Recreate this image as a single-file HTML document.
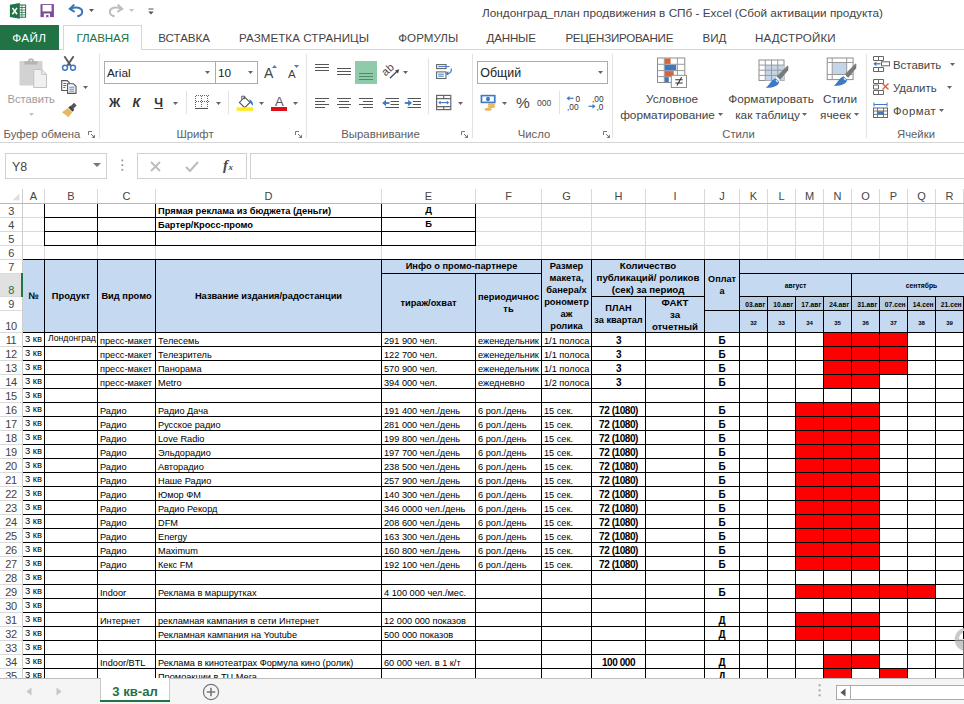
<!DOCTYPE html>
<html lang="ru"><head><meta charset="utf-8"><title>Excel</title>
<style>
html,body{margin:0;padding:0;background:#fff;}
body{width:964px;height:704px;overflow:hidden;position:relative;font-family:"Liberation Sans",sans-serif;color:#000;}
#grid{position:absolute;left:0;top:0;width:964px;height:678px;overflow:hidden;}
#grid>div,#grid>svg{position:absolute;}
.t{white-space:nowrap;overflow:hidden;font-size:9.2px;box-sizing:border-box;}
.t.l{padding-left:2px;padding-top:2px;}
.t.c{text-align:center;padding-top:1px;}
.t.b{font-weight:bold;font-size:9.3px;}
.t.a{font-size:9.4px;padding-left:2px;line-height:11px !important;}
.t.bb{font-size:8.7px;padding-left:3px;line-height:11px !important;}
.t.hd{font-size:11px;color:#444;-webkit-text-stroke:0;}
.hc{display:flex;align-items:center;justify-content:center;text-align:center;font-weight:bold;line-height:12px;overflow:hidden;}
.hc span{display:block;}
#top,#bot{position:absolute;left:0;width:964px;}
#top{top:0;height:189px;}
#top>*,#bot>*{position:absolute;}
.u{font-size:11.6px;color:#444;white-space:nowrap;line-height:14px;}
.tab{text-align:center;}
</style></head><body>

<div id="top">
<svg style="left:9px;top:2px" width="18" height="18" viewBox="0 0 18 18"><rect x="9" y="3" width="7.6" height="12.2" fill="#fff" stroke="#217346" stroke-width="1"/><path d="M12.9 3v12.2M9 5.5h7.6M9 8h7.6M9 10.4h7.6M9 12.8h7.6" stroke="#217346" stroke-width="0.8"/><path d="M0.9 2.7L10.8 0.9v15.9L0.9 15.1z" fill="#217346"/><path d="M3.4 5.9l4.6 6.4M8 5.9l-4.6 6.4" stroke="#fff" stroke-width="1.6"/></svg>
<svg style="left:40px;top:4px" width="14" height="14" viewBox="0 0 14 14"><rect x="0.5" y="0.1" width="13.4" height="13" fill="#7d4a9f"/><rect x="2.5" y="1" width="9.1" height="6.4" fill="#fff"/><rect x="3.8" y="9.5" width="6.2" height="3.6" fill="#fff"/><rect x="6.2" y="11" width="2.3" height="2.1" fill="#7d4a9f"/></svg>
<svg style="left:68px;top:4px" width="16" height="14" viewBox="0 0 16 14"><path d="M6.3 0.6L1.8 4.8l4.8 3" fill="none" stroke="#3a74b8" stroke-width="2"/><path d="M2.5 4.7C8 2.4 14 3.5 14.2 7.5c0.2 2.6-2.2 4.4-4.9 4.8" fill="none" stroke="#3a74b8" stroke-width="2"/></svg>
<svg style="left:89px;top:9px" width="5" height="3" viewBox="0 0 5 3"><path d="M0 0h5l-2.5 3z" fill="#555"/></svg>
<svg style="left:108px;top:4px" width="16" height="14" viewBox="0 0 16 14"><path d="M9.7 0.6L14.2 4.8l-4.8 3" fill="none" stroke="#bdbdbd" stroke-width="2"/><path d="M13.5 4.7C8 2.4 2 3.5 1.8 7.5c-0.2 2.6 2.2 4.4 4.9 4.8" fill="none" stroke="#bdbdbd" stroke-width="2"/></svg>
<svg style="left:129px;top:9px" width="5" height="3" viewBox="0 0 5 3"><path d="M0 0h5l-2.5 3z" fill="#c4c4c4"/></svg>
<svg style="left:148px;top:8px" width="6" height="7" viewBox="0 0 6 7"><path d="M0.5 1h5" stroke="#555" stroke-width="1"/><path d="M0.3 3.5h5.4L3 6.5z" fill="#555"/></svg>
<div class="u" style="left:382.5px;width:600px;text-align:center;top:6.12px;font-size:11.77px;color:#444;">Лондонград_план продвижения в СПб - Excel (Сбой активации продукта)</div>
<div style="left:0;top:49px;width:964px;height:1px;background:#d6d6d6"></div>
<div style="left:0;top:25px;width:59px;height:25px;background:#217346"></div>
<div style="left:63px;top:25px;width:79px;height:25px;background:#fff;border:1px solid #d6d6d6;border-bottom:none;box-sizing:border-box"></div>
<div class="u" style="left:12.3px;top:31.11px;font-size:11.8px;color:#fff;letter-spacing:0.3px;">ФАЙЛ</div>
<div class="u" style="left:76.5px;top:31.18px;font-size:11.6px;color:#217346;letter-spacing:-0.1px;">ГЛАВНАЯ</div>
<div class="u" style="left:158.3px;top:31.2px;font-size:11.6px;letter-spacing:-0.06px;color:#444">ВСТАВКА</div>
<div class="u" style="left:239px;top:31.2px;font-size:11.6px;letter-spacing:0.055px;color:#444">РАЗМЕТКА СТРАНИЦЫ</div>
<div class="u" style="left:398.3px;top:31.2px;font-size:11.6px;letter-spacing:0px;color:#444">ФОРМУЛЫ</div>
<div class="u" style="left:486.6px;top:31.2px;font-size:11.6px;letter-spacing:-0.2px;color:#444">ДАННЫЕ</div>
<div class="u" style="left:565.4px;top:31.2px;font-size:11.6px;letter-spacing:-0.27px;color:#444">РЕЦЕНЗИРОВАНИЕ</div>
<div class="u" style="left:702.6px;top:31.2px;font-size:11.6px;letter-spacing:-0.1px;color:#444">ВИД</div>
<div class="u" style="left:755px;top:31.2px;font-size:11.6px;letter-spacing:0.15px;color:#444">НАДСТРОЙКИ</div>
<svg style="left:19px;top:57px" width="29" height="32" viewBox="0 0 29 32"><rect x="0.5" y="4" width="23" height="24.5" rx="1" fill="#d2d2d2"/><path d="M5.5 7.5V4.2h3.6a2.9 2.9 0 0 1 5.8 0h3.6v3.3z" fill="#b4b4b4"/><circle cx="12" cy="3.6" r="1" fill="#e6e6e6"/><path d="M14.7 12.5h8l4.8 4.8v13.2H14.7z" fill="#f1eff1" stroke="#c2c2c2" stroke-width="1"/><path d="M22.7 12.5v4.8h4.8" fill="none" stroke="#c2c2c2" stroke-width="1"/></svg>
<div class="u" style="left:7.5px;top:91.72px;font-size:11.2px;color:#9d9d9d;">Вставить</div>
<svg style="left:29px;top:113px" width="5" height="3" viewBox="0 0 5 3"><path d="M0 0h5l-2.5 3z" fill="#c4c4c4"/></svg>
<svg style="left:61px;top:56px" width="16" height="15" viewBox="0 0 16 15"><path d="M3.4 0.3l6.4 9.6M12.6 0.3l-6.4 9.6" stroke="#5a5a5a" stroke-width="1.9" fill="none"/><circle cx="4" cy="11.8" r="2.5" fill="#fff" stroke="#3c78c6" stroke-width="1.5"/><circle cx="12" cy="11.8" r="2.5" fill="#fff" stroke="#3c78c6" stroke-width="1.5"/></svg>
<svg style="left:61px;top:80px" width="16" height="14" viewBox="0 0 16 14"><path d="M0.7 0.6h5.5l2 2v7.9H0.7z" fill="#fff" stroke="#555" stroke-width="1.1"/><path d="M2.3 3.5h3M2.3 5.5h3M2.3 7.5h2" stroke="#555" stroke-width="0.9"/><path d="M6.6 3.7h5.8l2.6 2.6v7.1H6.6z" fill="#fff" stroke="#555" stroke-width="1.1"/><path d="M8.3 7.2h5M8.3 9.2h5M8.3 11.2h5" stroke="#3c78c6" stroke-width="0.9"/></svg>
<svg style="left:83px;top:86px" width="5" height="3" viewBox="0 0 5 3"><path d="M0 0h5l-2.5 3z" fill="#666"/></svg>
<svg style="left:61px;top:102px" width="17" height="16" viewBox="0 0 17 16"><path d="M9.5 4.2L13 0.8l2.6 2.6-3.4 3.5z" fill="#555"/><path d="M7.3 5.6l2-1.8 4 4-1.8 2z" fill="#444"/><path d="M1 10.2l6-4.2 4.3 4.3-3.8 5z" fill="#e8b763"/></svg>
<div class="u" style="left:3.5px;top:127.08px;font-size:11.3px;color:#606060;">Буфер обмена</div>
<svg style="left:88px;top:131px" width="8" height="8" viewBox="0 0 8 8"><path d="M0.5 4V0.5H4" fill="none" stroke="#777" stroke-width="1"/><path d="M3 3l3.5 3.5" stroke="#777" stroke-width="1"/><path d="M7 3.5V7H3.5z" fill="#777"/></svg>
<div style="left:99px;top:54px;width:1px;height:84px;background:#e2e2e2"></div>
<div style="left:104px;top:61px;width:112px;height:23px;border:1px solid #ababab;box-sizing:border-box;background:#fff"></div>
<div style="left:215px;top:61px;width:43px;height:23px;border:1px solid #ababab;box-sizing:border-box;background:#fff"></div>
<div class="u" style="left:107px;top:66.11px;font-size:11.8px;color:#222;">Arial</div>
<svg style="left:205px;top:71px" width="5" height="3" viewBox="0 0 5 3"><path d="M0 0h5l-2.5 3z" fill="#666"/></svg>
<div class="u" style="left:218px;top:66.11px;font-size:11.8px;color:#222;">10</div>
<svg style="left:248px;top:71px" width="5" height="3" viewBox="0 0 5 3"><path d="M0 0h5l-2.5 3z" fill="#666"/></svg>
<div class="u" style="left:264px;top:66.15px;font-size:14px;color:#444;">A</div>
<svg style="left:272px;top:65px" width="5" height="3" viewBox="0 0 5 3"><path d="M0 3h5L2.5 0z" fill="#4a7dbb"/></svg>
<div class="u" style="left:288px;top:67.02px;font-size:11.5px;color:#444;">A</div>
<svg style="left:294px;top:65px" width="5" height="3" viewBox="0 0 5 3"><path d="M0 0h5L2.5 3z" fill="#4a7dbb"/></svg>
<div class="u" style="left:109px;top:96.17px;font-size:12.5px;color:#333;font-weight:bold;">Ж</div>
<div class="u" style="left:132.5px;top:96.17px;font-size:12.5px;color:#333;font-weight:bold;font-style:italic;">К</div>
<div class="u" style="left:154.3px;top:95.67px;font-size:12.5px;color:#333;text-decoration:underline;font-weight:bold;">Ч</div>
<svg style="left:173px;top:102px" width="5" height="3" viewBox="0 0 5 3"><path d="M0 0h5l-2.5 3z" fill="#666"/></svg>
<div style="left:186px;top:91px;width:1px;height:23px;background:#e2e2e2"></div>
<svg style="left:195px;top:95px" width="14" height="15" viewBox="0 0 14 15"><g shape-rendering="crispEdges"><path d="M0.5 0.5h13M0.5 6.5h13M0.5 0.5v13M6.5 0.5v13M12.5 0.5v13" fill="none" stroke="#666" stroke-width="1" stroke-dasharray="1 1"/><path d="M0 13.5h13" stroke="#555" stroke-width="1"/></g></svg>
<svg style="left:216px;top:102px" width="5" height="3" viewBox="0 0 5 3"><path d="M0 0h5l-2.5 3z" fill="#666"/></svg>
<div style="left:228px;top:91px;width:1px;height:23px;background:#e2e2e2"></div>
<svg style="left:236px;top:94px" width="18" height="17" viewBox="0 0 18 17"><path d="M8.7 3.2l5.3 5.2-5.3 5.3-5.3-5.3z" fill="#fff" stroke="#555" stroke-width="1.1"/><path d="M5.8 5.6V2.2h2.8v3" fill="none" stroke="#555" stroke-width="1"/><path d="M13.4 5.2c2.8 1.2 4.2 3.8 3.4 6.8-1-1.4-1.8-2.6-3.2-3.4z" fill="#3c78c6"/><rect x="0.7" y="13.3" width="16.3" height="3.5" fill="#ffec19"/></svg>
<svg style="left:259px;top:102px" width="5" height="3" viewBox="0 0 5 3"><path d="M0 0h5l-2.5 3z" fill="#666"/></svg>
<div class="u" style="left:275px;top:95.10px;font-size:13px;color:#555;">A</div>
<div style="left:271px;top:107px;width:16px;height:4px;background:#e0101a"></div>
<svg style="left:293px;top:102px" width="5" height="3" viewBox="0 0 5 3"><path d="M0 0h5l-2.5 3z" fill="#666"/></svg>
<div class="u" style="left:-105px;width:600px;text-align:center;top:127.08px;font-size:11.3px;color:#606060;">Шрифт</div>
<svg style="left:294.5px;top:131px" width="8" height="8" viewBox="0 0 8 8"><path d="M0.5 4V0.5H4" fill="none" stroke="#777" stroke-width="1"/><path d="M3 3l3.5 3.5" stroke="#777" stroke-width="1"/><path d="M7 3.5V7H3.5z" fill="#777"/></svg>
<div style="left:306px;top:54px;width:1px;height:84px;background:#e2e2e2"></div>
<svg style="left:314px;top:63px" width="16" height="14" viewBox="0 0 16 14"><path d="M1 1.5H15" stroke="#555" stroke-width="1"/><path d="M1 4.5H15" stroke="#555" stroke-width="1"/><path d="M1 7.5H15" stroke="#555" stroke-width="1"/></svg>
<svg style="left:336px;top:66px" width="16" height="14" viewBox="0 0 16 14"><path d="M1 2.5H15" stroke="#555" stroke-width="1"/><path d="M1 5.5H15" stroke="#555" stroke-width="1"/><path d="M1 8.5H15" stroke="#555" stroke-width="1"/></svg>
<div style="left:355px;top:61px;width:22px;height:23px;background:#8fcbab"></div>
<svg style="left:358px;top:70px" width="16" height="14" viewBox="0 0 16 14"><path d="M1 3.5H15" stroke="#4f8a6c" stroke-width="1"/><path d="M1 6.5H15" stroke="#4f8a6c" stroke-width="1"/><path d="M1 9.5H15" stroke="#4f8a6c" stroke-width="1"/></svg>
<svg style="left:382px;top:62px" width="19" height="19" viewBox="0 0 19 19"><text font-size="11" font-family="Liberation Sans" fill="#444" transform="translate(3.6,14.4) rotate(-42)">ab</text><path d="M7.9 16.3L15.6 8.8" stroke="#444" stroke-width="1.2"/><path d="M17.2 7.2l-4.2 1.2 3 3z" fill="#444"/></svg>
<svg style="left:403px;top:71px" width="5" height="3" viewBox="0 0 5 3"><path d="M0 0h5l-2.5 3z" fill="#666"/></svg>
<div style="left:428px;top:58px;width:1px;height:56px;background:#e2e2e2"></div>
<svg style="left:435px;top:63px" width="19" height="18" viewBox="0 0 19 18"><rect x="1.6" y="1.6" width="9.4" height="4" fill="#fff" stroke="#666" stroke-width="1.1"/><path d="M3.2 3.6H14.6" stroke="#3c78c6" stroke-width="1"/><rect x="1.6" y="8.9" width="9.4" height="6.6" fill="#fff" stroke="#666" stroke-width="1.1"/><path d="M3.2 11.2H8.8M3.2 13.2H8.8" stroke="#3c78c6" stroke-width="1"/><path d="M16.2 5.4c0.8 3-1 5-4 5.3" fill="none" stroke="#3c78c6" stroke-width="1.1"/><path d="M10.4 10.6l3-2.3v4.4z" fill="#3c78c6"/></svg>
<svg style="left:314px;top:97px" width="16" height="14" viewBox="0 0 16 14"><path d="M1 1.5H15" stroke="#555" stroke-width="1"/><path d="M1 4.5H11" stroke="#555" stroke-width="1"/><path d="M1 7.5H15" stroke="#555" stroke-width="1"/><path d="M1 10.5H11" stroke="#555" stroke-width="1"/></svg>
<svg style="left:336px;top:97px" width="16" height="14" viewBox="0 0 16 14"><path d="M1 1.5H15" stroke="#555" stroke-width="1"/><path d="M3 4.5H13" stroke="#555" stroke-width="1"/><path d="M1 7.5H15" stroke="#555" stroke-width="1"/><path d="M3 10.5H13" stroke="#555" stroke-width="1"/></svg>
<svg style="left:358px;top:97px" width="16" height="14" viewBox="0 0 16 14"><path d="M1 1.5H15" stroke="#555" stroke-width="1"/><path d="M5 4.5H15" stroke="#555" stroke-width="1"/><path d="M1 7.5H15" stroke="#555" stroke-width="1"/><path d="M5 10.5H15" stroke="#555" stroke-width="1"/></svg>
<svg style="left:382px;top:97px" width="18" height="12" viewBox="0 0 18 12"><path d="M3.5 1.5H17M8.5 4.5H17M8.5 7.5H17M3.5 10.5H17" stroke="#555" stroke-width="1"/><path d="M2.5 6h5" stroke="#3c78c6" stroke-width="1.8"/><path d="M0.2 6l3.8-3.2v6.4z" fill="#3c78c6"/></svg>
<svg style="left:404px;top:97px" width="18" height="12" viewBox="0 0 18 12"><path d="M3.5 1.5H17M8.8 4.5H17M8.8 7.5H17M3.5 10.5H17" stroke="#555" stroke-width="1"/><path d="M0.8 6h5" stroke="#3c78c6" stroke-width="1.8"/><path d="M8 6L4.2 2.8v6.4z" fill="#3c78c6"/></svg>
<svg style="left:435px;top:94px" width="17" height="17" viewBox="0 0 17 17"><rect x="1.6" y="1.4" width="14.2" height="14.2" fill="#fff" stroke="#666" stroke-width="1.2"/><path d="M1.6 4.6h14.2M1.6 12.6h14.2M8.7 1.4v3.2M8.7 12.6v3" stroke="#666" stroke-width="1.2"/><path d="M4.6 8.6h8.2" stroke="#3c78c6" stroke-width="1.1"/><path d="M3.2 8.6l2.4-1.9v3.8zM14.2 8.6l-2.4-1.9v3.8z" fill="#3c78c6"/></svg>
<svg style="left:458px;top:102px" width="5" height="3" viewBox="0 0 5 3"><path d="M0 0h5l-2.5 3z" fill="#666"/></svg>
<div class="u" style="left:80.5px;width:600px;text-align:center;top:127.03px;font-size:11.45px;color:#606060;">Выравнивание</div>
<svg style="left:460.5px;top:131px" width="8" height="8" viewBox="0 0 8 8"><path d="M0.5 4V0.5H4" fill="none" stroke="#777" stroke-width="1"/><path d="M3 3l3.5 3.5" stroke="#777" stroke-width="1"/><path d="M7 3.5V7H3.5z" fill="#777"/></svg>
<div style="left:472px;top:54px;width:1px;height:84px;background:#e2e2e2"></div>
<div style="left:477px;top:61px;width:131px;height:23px;border:1px solid #ababab;box-sizing:border-box;background:#fff"></div>
<div class="u" style="left:480.3px;top:66.10px;font-size:12.4px;color:#222;">Общий</div>
<svg style="left:598px;top:71px" width="5" height="3" viewBox="0 0 5 3"><path d="M0 0h5l-2.5 3z" fill="#666"/></svg>
<svg style="left:480px;top:94px" width="18" height="18" viewBox="0 0 18 18"><rect x="0.6" y="0.8" width="15" height="8.4" fill="#3c78c6"/><rect x="2.3" y="2.4" width="11.6" height="5.2" fill="#fff"/><ellipse cx="8" cy="5" rx="2" ry="2.3" fill="#3c78c6"/><ellipse cx="11.4" cy="10.2" rx="3.6" ry="1.5" fill="#e8b763"/><ellipse cx="11.4" cy="12.6" rx="3.6" ry="1.5" fill="#e8b763"/><ellipse cx="8.2" cy="15.3" rx="3.6" ry="1.5" fill="#e8b763"/></svg>
<svg style="left:502px;top:102px" width="5" height="3" viewBox="0 0 5 3"><path d="M0 0h5l-2.5 3z" fill="#666"/></svg>
<div class="u" style="left:516px;top:96.23px;font-size:15.5px;color:#444;">%</div>
<div class="u" style="left:537px;top:96.02px;font-size:8.6px;color:#444;">000</div>
<div style="left:559px;top:91px;width:1px;height:23px;background:#e2e2e2"></div>
<svg style="left:566px;top:95px" width="18" height="16" viewBox="0 0 18 16"><path d="M2.5 3.3h5" stroke="#3c78c6" stroke-width="1.2"/><path d="M0.5 3.3l3-2.4v4.8z" fill="#3c78c6"/><text x="9.5" y="6.5" font-size="8.3" font-family="Liberation Sans" fill="#333">0</text><text x="1" y="14.5" font-size="8.3" font-family="Liberation Sans" fill="#333">,00</text></svg>
<svg style="left:588px;top:95px" width="18" height="16" viewBox="0 0 18 16"><text x="4" y="6.5" font-size="8.3" font-family="Liberation Sans" fill="#333">,00</text><path d="M0.5 11.3h5" stroke="#3c78c6" stroke-width="1.2"/><path d="M7.5 11.3l-3-2.4v4.8z" fill="#3c78c6"/><text x="8.5" y="14.5" font-size="8.3" font-family="Liberation Sans" fill="#333">,0</text></svg>
<div class="u" style="left:234px;width:600px;text-align:center;top:127.08px;font-size:11.3px;color:#606060;">Число</div>
<svg style="left:603px;top:131px" width="8" height="8" viewBox="0 0 8 8"><path d="M0.5 4V0.5H4" fill="none" stroke="#777" stroke-width="1"/><path d="M3 3l3.5 3.5" stroke="#777" stroke-width="1"/><path d="M7 3.5V7H3.5z" fill="#777"/></svg>
<div style="left:612px;top:54px;width:1px;height:84px;background:#e2e2e2"></div>
<svg style="left:657px;top:57px" width="31" height="32" viewBox="0 0 31 32"><rect x="0.5" y="1" width="27.3" height="24.5" fill="#fff" stroke="#8e8e8e" stroke-width="1"/><path d="M0.5 7.3h27.3M0.5 13.6h27.3M0.5 19.6h27.3M7.3 1v24.5M20.4 1v24.5" stroke="#9a9a9a" stroke-width="1"/><rect x="7.8" y="1.5" width="5.8" height="5.4" fill="#d9623a"/><rect x="7.8" y="7.9" width="11.4" height="5.3" fill="#3c78c6"/><rect x="7.8" y="14.1" width="8.9" height="5.1" fill="#d9623a"/><rect x="7.8" y="20.1" width="4" height="5" fill="#3c78c6"/><rect x="14.3" y="18.3" width="15.2" height="12.2" fill="#fff" stroke="#8e8e8e" stroke-width="1"/><path d="M18.3 22.8h7.4M18.3 26h7.4M24.6 20.3l-4.6 8.2" stroke="#333" stroke-width="1.1"/></svg>
<div class="u" style="left:372px;width:600px;text-align:center;top:91.51px;font-size:11.8px;color:#444;">Условное</div>
<div class="u" style="left:367.5px;width:600px;text-align:center;top:107.51px;font-size:11.8px;color:#444;">форматирование</div>
<svg style="left:718px;top:113px" width="5" height="3" viewBox="0 0 5 3"><path d="M0 0h5l-2.5 3z" fill="#666"/></svg>
<svg style="left:758px;top:58px" width="33" height="32" viewBox="0 0 33 32"><rect x="1" y="2" width="25" height="20.5" fill="#fff" stroke="#8e8e8e" stroke-width="1"/><rect x="7.25" y="7.1" width="18.75" height="15.4" fill="#c4d5ea"/><path d="M1 7.1h25M1 12.2h25M1 17.4h25M7.25 2v20.5M13.5 2v20.5M19.75 2v20.5" stroke="#9a9a9a" stroke-width="1"/><path d="M18.8 18.3L29.6 7.6l0.8 0.3-0.2 4.4-8 9.5z" fill="#7a7a7a"/><path d="M17.4 19.9l1.1-1.2 3.4 3.4-1 1.3z" fill="#fff"/><path d="M17.6 20.2l3.6 3.5c-0.6 3.6-4.6 6.3-13.8 6.1 4-2.2 5-7.4 10.2-9.6z" fill="#3c78c6"/><path d="M17.6 21.8c1.6 0.2 2.6 1.2 2.6 2.8-1.2-0.2-2.6-1-2.6-2.8z" fill="#fff" opacity="0.85"/></svg>
<div class="u" style="left:471px;width:600px;text-align:center;top:91.51px;font-size:11.8px;color:#444;">Форматировать</div>
<div class="u" style="left:467.5px;width:600px;text-align:center;top:107.51px;font-size:11.8px;color:#444;">как таблицу</div>
<svg style="left:802px;top:113px" width="5" height="3" viewBox="0 0 5 3"><path d="M0 0h5l-2.5 3z" fill="#666"/></svg>
<svg style="left:826px;top:56px" width="33" height="32" viewBox="0 0 33 32"><rect x="1.2" y="2" width="25.9" height="21.6" fill="#fff" stroke="#8e8e8e" stroke-width="1"/><rect x="6.2" y="6.5" width="14.5" height="12" fill="#c4d5ea"/><path d="M1.2 6.5h25.9M1.2 18.5h25.9M6.2 2v21.6M20.7 2v21.6" stroke="#9a9a9a" stroke-width="1"/><path d="M18.8 18.3L29.6 7.6l0.8 0.3-0.2 4.4-8 9.5z" fill="#7a7a7a"/><path d="M17.4 19.9l1.1-1.2 3.4 3.4-1 1.3z" fill="#fff"/><path d="M17.6 20.2l3.6 3.5c-0.6 3.6-4.6 6.3-13.8 6.1 4-2.2 5-7.4 10.2-9.6z" fill="#3c78c6"/><path d="M17.6 21.8c1.6 0.2 2.6 1.2 2.6 2.8-1.2-0.2-2.6-1-2.6-2.8z" fill="#fff" opacity="0.85"/></svg>
<div class="u" style="left:540px;width:600px;text-align:center;top:91.51px;font-size:11.8px;color:#444;">Стили</div>
<div class="u" style="left:535.5px;width:600px;text-align:center;top:107.51px;font-size:11.8px;color:#444;">ячеек</div>
<svg style="left:854px;top:113px" width="5" height="3" viewBox="0 0 5 3"><path d="M0 0h5l-2.5 3z" fill="#666"/></svg>
<div class="u" style="left:438.5px;width:600px;text-align:center;top:127.08px;font-size:11.3px;color:#606060;">Стили</div>
<div style="left:866px;top:54px;width:1px;height:84px;background:#e2e2e2"></div>
<svg style="left:873px;top:56px" width="18" height="16" viewBox="0 0 18 16"><path d="M0.5 0.5h5v4h-5zM0.5 11.5h5v4h-5zM5.5 11.5h5v4h-5zM5.5 0.5h5v4h-5z" fill="#fff" stroke="#666" stroke-width="1"/><rect x="8.5" y="5.8" width="8" height="4" fill="#fff" stroke="#666"/><path d="M2.5 7.8h5" stroke="#3c78c6" stroke-width="1.3"/><path d="M0.3 7.8l3-2.4v4.8z" fill="#3c78c6"/></svg>
<div class="u" style="left:893px;top:57.65px;font-size:11.4px;color:#444;">Вставить</div>
<svg style="left:950px;top:63px" width="5" height="3" viewBox="0 0 5 3"><path d="M0 0h5l-2.5 3z" fill="#666"/></svg>
<svg style="left:873px;top:79px" width="18" height="16" viewBox="0 0 18 16"><path d="M0.5 0.5h5v4h-5zM5.5 0.5h5v4h-5zM0.5 6h5v4h-5zM0.5 11.5h5v4h-5zM5.5 11.5h5v4h-5z" fill="#fff" stroke="#666" stroke-width="1"/><path d="M9.5 4.5l6 6M15.5 4.5l-6 6" stroke="#d9623a" stroke-width="1.4"/></svg>
<div class="u" style="left:893px;top:80.53px;font-size:11.45px;color:#444;">Удалить</div>
<svg style="left:947px;top:86px" width="5" height="3" viewBox="0 0 5 3"><path d="M0 0h5l-2.5 3z" fill="#666"/></svg>
<svg style="left:873px;top:102px" width="18" height="16" viewBox="0 0 18 16"><path d="M1 2.5h13M1 0.5v4M14 0.5v4" stroke="#3c78c6" stroke-width="1" fill="none"/><rect x="0.5" y="6" width="14" height="9.5" fill="#fff" stroke="#666" stroke-width="1"/><path d="M0.5 9h14M0.5 12.4h14M4.5 6v9.5M10.5 6v9.5" stroke="#666" stroke-width="0.9"/><rect x="5" y="9.3" width="5" height="3" fill="#3c78c6"/></svg>
<div class="u" style="left:893px;top:103.75px;font-size:11.4px;color:#444;letter-spacing:0.45px;">Формат</div>
<svg style="left:939px;top:109px" width="5" height="3" viewBox="0 0 5 3"><path d="M0 0h5l-2.5 3z" fill="#666"/></svg>
<div class="u" style="left:616px;width:600px;text-align:center;top:127.08px;font-size:11.3px;color:#606060;">Ячейки</div>
<div style="left:0;top:142px;width:964px;height:1px;background:#d6d6d6"></div>
<div style="left:5px;top:153px;width:102px;height:26px;border:1px solid #d0d0d0;box-sizing:border-box;background:#fff"></div>
<div class="u" style="left:12px;top:159.50px;font-size:12.4px;color:#444;">Y8</div>
<svg style="left:93px;top:163px" width="8" height="4" viewBox="0 0 8 4"><path d="M0 0h8L4 4z" fill="#777"/></svg>
<svg style="left:121px;top:159px" width="3" height="13" viewBox="0 0 3 13"><rect x="0.4" y="0.5" width="1.8" height="1.8" fill="#999"/><rect x="0.4" y="5.2" width="1.8" height="1.8" fill="#999"/><rect x="0.4" y="9.9" width="1.8" height="1.8" fill="#999"/></svg>
<div style="left:137px;top:153px;width:110px;height:26px;border:1px solid #d0d0d0;box-sizing:border-box;background:#fff"></div>
<svg style="left:150px;top:161px" width="11" height="11" viewBox="0 0 11 11"><path d="M1 1l9 9M10 1l-9 9" stroke="#bcbcbc" stroke-width="1.8"/></svg>
<svg style="left:185px;top:161px" width="14" height="11" viewBox="0 0 14 11"><path d="M1 6l4 4L13 1" stroke="#bcbcbc" stroke-width="2" fill="none"/></svg>
<div class="u" style="left:223px;top:157px;font-family:'Liberation Serif',serif;font-style:italic;font-weight:bold;font-size:15px;color:#4a4a4a;line-height:16px">f<span style="font-size:9px;margin-left:0.5px">x</span></div>
<div style="left:250px;top:153px;width:730px;height:26px;border:1px solid #d0d0d0;box-sizing:border-box;background:#fff"></div>
</div>
<div id="grid">
<div style="left:0px;top:203px;width:964px;height:1px;background:#dadada;"></div>
<div style="left:0px;top:217px;width:964px;height:1px;background:#dadada;"></div>
<div style="left:0px;top:231px;width:964px;height:1px;background:#dadada;"></div>
<div style="left:0px;top:245px;width:964px;height:1px;background:#dadada;"></div>
<div style="left:0px;top:259px;width:964px;height:1px;background:#dadada;"></div>
<div style="left:22px;top:189px;width:1px;height:71px;background:#dadada;"></div>
<div style="left:44px;top:189px;width:1px;height:71px;background:#dadada;"></div>
<div style="left:97px;top:189px;width:1px;height:71px;background:#dadada;"></div>
<div style="left:155px;top:189px;width:1px;height:71px;background:#dadada;"></div>
<div style="left:381px;top:189px;width:1px;height:71px;background:#dadada;"></div>
<div style="left:475px;top:189px;width:1px;height:71px;background:#dadada;"></div>
<div style="left:541px;top:189px;width:1px;height:71px;background:#dadada;"></div>
<div style="left:591px;top:189px;width:1px;height:71px;background:#dadada;"></div>
<div style="left:645px;top:189px;width:1px;height:71px;background:#dadada;"></div>
<div style="left:704px;top:189px;width:1px;height:71px;background:#dadada;"></div>
<div style="left:739px;top:189px;width:1px;height:71px;background:#dadada;"></div>
<div style="left:767px;top:189px;width:1px;height:71px;background:#dadada;"></div>
<div style="left:795px;top:189px;width:1px;height:71px;background:#dadada;"></div>
<div style="left:823px;top:189px;width:1px;height:71px;background:#dadada;"></div>
<div style="left:851px;top:189px;width:1px;height:71px;background:#dadada;"></div>
<div style="left:879px;top:189px;width:1px;height:71px;background:#dadada;"></div>
<div style="left:907px;top:189px;width:1px;height:71px;background:#dadada;"></div>
<div style="left:935px;top:189px;width:1px;height:71px;background:#dadada;"></div>
<div style="left:963px;top:189px;width:1px;height:71px;background:#dadada;"></div>
<div style="left:0px;top:203px;width:22px;height:1px;background:#dadada;"></div>
<div style="left:0px;top:217px;width:22px;height:1px;background:#dadada;"></div>
<div style="left:0px;top:231px;width:22px;height:1px;background:#dadada;"></div>
<div style="left:0px;top:245px;width:22px;height:1px;background:#dadada;"></div>
<div style="left:0px;top:259px;width:22px;height:1px;background:#dadada;"></div>
<div style="left:0px;top:273px;width:22px;height:1px;background:#dadada;"></div>
<div style="left:0px;top:296px;width:22px;height:1px;background:#dadada;"></div>
<div style="left:0px;top:310px;width:22px;height:1px;background:#dadada;"></div>
<div style="left:0px;top:332px;width:22px;height:1px;background:#dadada;"></div>
<div style="left:0px;top:346px;width:22px;height:1px;background:#dadada;"></div>
<div style="left:0px;top:360px;width:22px;height:1px;background:#dadada;"></div>
<div style="left:0px;top:374px;width:22px;height:1px;background:#dadada;"></div>
<div style="left:0px;top:388px;width:22px;height:1px;background:#dadada;"></div>
<div style="left:0px;top:402px;width:22px;height:1px;background:#dadada;"></div>
<div style="left:0px;top:416px;width:22px;height:1px;background:#dadada;"></div>
<div style="left:0px;top:430px;width:22px;height:1px;background:#dadada;"></div>
<div style="left:0px;top:444px;width:22px;height:1px;background:#dadada;"></div>
<div style="left:0px;top:458px;width:22px;height:1px;background:#dadada;"></div>
<div style="left:0px;top:472px;width:22px;height:1px;background:#dadada;"></div>
<div style="left:0px;top:486px;width:22px;height:1px;background:#dadada;"></div>
<div style="left:0px;top:500px;width:22px;height:1px;background:#dadada;"></div>
<div style="left:0px;top:514px;width:22px;height:1px;background:#dadada;"></div>
<div style="left:0px;top:528px;width:22px;height:1px;background:#dadada;"></div>
<div style="left:0px;top:542px;width:22px;height:1px;background:#dadada;"></div>
<div style="left:0px;top:556px;width:22px;height:1px;background:#dadada;"></div>
<div style="left:0px;top:570px;width:22px;height:1px;background:#dadada;"></div>
<div style="left:0px;top:584px;width:22px;height:1px;background:#dadada;"></div>
<div style="left:0px;top:598px;width:22px;height:1px;background:#dadada;"></div>
<div style="left:0px;top:612px;width:22px;height:1px;background:#dadada;"></div>
<div style="left:0px;top:626px;width:22px;height:1px;background:#dadada;"></div>
<div style="left:0px;top:640px;width:22px;height:1px;background:#dadada;"></div>
<div style="left:0px;top:654px;width:22px;height:1px;background:#dadada;"></div>
<div style="left:0px;top:668px;width:22px;height:1px;background:#dadada;"></div>
<div style="left:22px;top:189px;width:1px;height:489px;background:#cdcdcd;"></div>
<div style="left:0px;top:203px;width:964px;height:1px;background:#b8b8b8;"></div>
<svg style="left:12px;top:193px" width="8" height="8"><path d="M7.3 0.6V7.3H0.6Z" fill="#dedede"/></svg>
<div class="t hd" style="left:23px;top:189px;width:21px;height:15px;line-height:15px;text-align:center;">A</div>
<div class="t hd" style="left:45px;top:189px;width:52px;height:15px;line-height:15px;text-align:center;">B</div>
<div class="t hd" style="left:98px;top:189px;width:57px;height:15px;line-height:15px;text-align:center;">C</div>
<div class="t hd" style="left:156px;top:189px;width:225px;height:15px;line-height:15px;text-align:center;">D</div>
<div class="t hd" style="left:382px;top:189px;width:93px;height:15px;line-height:15px;text-align:center;">E</div>
<div class="t hd" style="left:476px;top:189px;width:65px;height:15px;line-height:15px;text-align:center;">F</div>
<div class="t hd" style="left:542px;top:189px;width:49px;height:15px;line-height:15px;text-align:center;">G</div>
<div class="t hd" style="left:592px;top:189px;width:53px;height:15px;line-height:15px;text-align:center;">H</div>
<div class="t hd" style="left:646px;top:189px;width:58px;height:15px;line-height:15px;text-align:center;">I</div>
<div class="t hd" style="left:705px;top:189px;width:34px;height:15px;line-height:15px;text-align:center;">J</div>
<div class="t hd" style="left:740px;top:189px;width:27px;height:15px;line-height:15px;text-align:center;">K</div>
<div class="t hd" style="left:768px;top:189px;width:27px;height:15px;line-height:15px;text-align:center;">L</div>
<div class="t hd" style="left:796px;top:189px;width:27px;height:15px;line-height:15px;text-align:center;">M</div>
<div class="t hd" style="left:824px;top:189px;width:27px;height:15px;line-height:15px;text-align:center;">N</div>
<div class="t hd" style="left:852px;top:189px;width:27px;height:15px;line-height:15px;text-align:center;">O</div>
<div class="t hd" style="left:880px;top:189px;width:27px;height:15px;line-height:15px;text-align:center;">P</div>
<div class="t hd" style="left:908px;top:189px;width:27px;height:15px;line-height:15px;text-align:center;">Q</div>
<div class="t hd" style="left:936px;top:189px;width:27px;height:15px;line-height:15px;text-align:center;">R</div>
<div class="t hd" style="left:0px;top:204px;width:22px;height:14px;line-height:14px;text-align:center;color:#444;letter-spacing:-0.4px;">3</div>
<div class="t hd" style="left:0px;top:218px;width:22px;height:14px;line-height:14px;text-align:center;color:#444;letter-spacing:-0.4px;">4</div>
<div class="t hd" style="left:0px;top:232px;width:22px;height:14px;line-height:14px;text-align:center;color:#444;letter-spacing:-0.4px;">5</div>
<div class="t hd" style="left:0px;top:246px;width:22px;height:14px;line-height:14px;text-align:center;color:#444;letter-spacing:-0.4px;">6</div>
<div class="t hd" style="left:0px;top:260px;width:22px;height:14px;line-height:14px;text-align:center;color:#444;letter-spacing:-0.4px;">7</div>
<div style="left:0px;top:274px;width:21px;height:22px;background:#e1e1e1;"></div>
<div style="left:21px;top:273px;width:2px;height:24px;background:#217346;"></div>
<div class="t hd" style="left:0px;top:283px;width:22px;height:14px;line-height:14px;text-align:center;color:#217346;letter-spacing:-0.4px;">8</div>
<div class="t hd" style="left:0px;top:297px;width:22px;height:14px;line-height:14px;text-align:center;color:#444;letter-spacing:-0.4px;">9</div>
<div class="t hd" style="left:0px;top:319px;width:22px;height:14px;line-height:14px;text-align:center;color:#444;letter-spacing:-0.4px;">10</div>
<div class="t hd" style="left:0px;top:333px;width:22px;height:14px;line-height:14px;text-align:center;color:#444;letter-spacing:-0.4px;">11</div>
<div class="t hd" style="left:0px;top:347px;width:22px;height:14px;line-height:14px;text-align:center;color:#444;letter-spacing:-0.4px;">12</div>
<div class="t hd" style="left:0px;top:361px;width:22px;height:14px;line-height:14px;text-align:center;color:#444;letter-spacing:-0.4px;">13</div>
<div class="t hd" style="left:0px;top:375px;width:22px;height:14px;line-height:14px;text-align:center;color:#444;letter-spacing:-0.4px;">14</div>
<div class="t hd" style="left:0px;top:389px;width:22px;height:14px;line-height:14px;text-align:center;color:#444;letter-spacing:-0.4px;">15</div>
<div class="t hd" style="left:0px;top:403px;width:22px;height:14px;line-height:14px;text-align:center;color:#444;letter-spacing:-0.4px;">16</div>
<div class="t hd" style="left:0px;top:417px;width:22px;height:14px;line-height:14px;text-align:center;color:#444;letter-spacing:-0.4px;">17</div>
<div class="t hd" style="left:0px;top:431px;width:22px;height:14px;line-height:14px;text-align:center;color:#444;letter-spacing:-0.4px;">18</div>
<div class="t hd" style="left:0px;top:445px;width:22px;height:14px;line-height:14px;text-align:center;color:#444;letter-spacing:-0.4px;">19</div>
<div class="t hd" style="left:0px;top:459px;width:22px;height:14px;line-height:14px;text-align:center;color:#444;letter-spacing:-0.4px;">20</div>
<div class="t hd" style="left:0px;top:473px;width:22px;height:14px;line-height:14px;text-align:center;color:#444;letter-spacing:-0.4px;">21</div>
<div class="t hd" style="left:0px;top:487px;width:22px;height:14px;line-height:14px;text-align:center;color:#444;letter-spacing:-0.4px;">22</div>
<div class="t hd" style="left:0px;top:501px;width:22px;height:14px;line-height:14px;text-align:center;color:#444;letter-spacing:-0.4px;">23</div>
<div class="t hd" style="left:0px;top:515px;width:22px;height:14px;line-height:14px;text-align:center;color:#444;letter-spacing:-0.4px;">24</div>
<div class="t hd" style="left:0px;top:529px;width:22px;height:14px;line-height:14px;text-align:center;color:#444;letter-spacing:-0.4px;">25</div>
<div class="t hd" style="left:0px;top:543px;width:22px;height:14px;line-height:14px;text-align:center;color:#444;letter-spacing:-0.4px;">26</div>
<div class="t hd" style="left:0px;top:557px;width:22px;height:14px;line-height:14px;text-align:center;color:#444;letter-spacing:-0.4px;">27</div>
<div class="t hd" style="left:0px;top:571px;width:22px;height:14px;line-height:14px;text-align:center;color:#444;letter-spacing:-0.4px;">28</div>
<div class="t hd" style="left:0px;top:585px;width:22px;height:14px;line-height:14px;text-align:center;color:#444;letter-spacing:-0.4px;">29</div>
<div class="t hd" style="left:0px;top:599px;width:22px;height:14px;line-height:14px;text-align:center;color:#444;letter-spacing:-0.4px;">30</div>
<div class="t hd" style="left:0px;top:613px;width:22px;height:14px;line-height:14px;text-align:center;color:#444;letter-spacing:-0.4px;">31</div>
<div class="t hd" style="left:0px;top:627px;width:22px;height:14px;line-height:14px;text-align:center;color:#444;letter-spacing:-0.4px;">32</div>
<div class="t hd" style="left:0px;top:641px;width:22px;height:14px;line-height:14px;text-align:center;color:#444;letter-spacing:-0.4px;">33</div>
<div class="t hd" style="left:0px;top:655px;width:22px;height:14px;line-height:14px;text-align:center;color:#444;letter-spacing:-0.4px;">34</div>
<div class="t hd" style="left:0px;top:669px;width:22px;height:14px;line-height:14px;text-align:center;color:#444;letter-spacing:-0.4px;">35</div>
<div style="left:23px;top:260px;width:941px;height:72px;background:#c5d9f1;"></div>
<div style="left:740px;top:297px;width:224px;height:13px;background:#b8cce4;"></div>
<div style="left:824px;top:333px;width:83px;height:41px;background:#ff0000;"></div>
<div style="left:824px;top:375px;width:55px;height:13px;background:#ff0000;"></div>
<div style="left:796px;top:403px;width:83px;height:167px;background:#ff0000;"></div>
<div style="left:796px;top:585px;width:139px;height:13px;background:#ff0000;"></div>
<div style="left:796px;top:613px;width:83px;height:27px;background:#ff0000;"></div>
<div style="left:824px;top:655px;width:55px;height:13px;background:#ff0000;"></div>
<div style="left:824px;top:669px;width:27px;height:9px;background:#ff0000;"></div>
<div style="left:880px;top:669px;width:27px;height:9px;background:#ff0000;"></div>
<div style="left:44px;top:204px;width:1px;height:42px;background:#000;"></div>
<div style="left:97px;top:204px;width:1px;height:42px;background:#000;"></div>
<div style="left:155px;top:204px;width:1px;height:42px;background:#000;"></div>
<div style="left:381px;top:204px;width:1px;height:42px;background:#000;"></div>
<div style="left:475px;top:204px;width:1px;height:42px;background:#000;"></div>
<div style="left:44px;top:217px;width:432px;height:1px;background:#000;"></div>
<div style="left:44px;top:231px;width:432px;height:1px;background:#000;"></div>
<div style="left:44px;top:245px;width:432px;height:1px;background:#000;"></div>
<div style="left:23px;top:259px;width:941px;height:1px;background:#000;"></div>
<div style="left:23px;top:332px;width:941px;height:1px;background:#000;"></div>
<div style="left:23px;top:346px;width:941px;height:1px;background:#000;"></div>
<div style="left:23px;top:360px;width:941px;height:1px;background:#000;"></div>
<div style="left:23px;top:374px;width:941px;height:1px;background:#000;"></div>
<div style="left:23px;top:388px;width:941px;height:1px;background:#000;"></div>
<div style="left:23px;top:402px;width:941px;height:1px;background:#000;"></div>
<div style="left:23px;top:416px;width:941px;height:1px;background:#000;"></div>
<div style="left:23px;top:430px;width:941px;height:1px;background:#000;"></div>
<div style="left:23px;top:444px;width:941px;height:1px;background:#000;"></div>
<div style="left:23px;top:458px;width:941px;height:1px;background:#000;"></div>
<div style="left:23px;top:472px;width:941px;height:1px;background:#000;"></div>
<div style="left:23px;top:486px;width:941px;height:1px;background:#000;"></div>
<div style="left:23px;top:500px;width:941px;height:1px;background:#000;"></div>
<div style="left:23px;top:514px;width:941px;height:1px;background:#000;"></div>
<div style="left:23px;top:528px;width:941px;height:1px;background:#000;"></div>
<div style="left:23px;top:542px;width:941px;height:1px;background:#000;"></div>
<div style="left:23px;top:556px;width:941px;height:1px;background:#000;"></div>
<div style="left:23px;top:570px;width:941px;height:1px;background:#000;"></div>
<div style="left:23px;top:584px;width:941px;height:1px;background:#000;"></div>
<div style="left:23px;top:598px;width:941px;height:1px;background:#000;"></div>
<div style="left:23px;top:612px;width:941px;height:1px;background:#000;"></div>
<div style="left:23px;top:626px;width:941px;height:1px;background:#000;"></div>
<div style="left:23px;top:640px;width:941px;height:1px;background:#000;"></div>
<div style="left:23px;top:654px;width:941px;height:1px;background:#000;"></div>
<div style="left:23px;top:668px;width:941px;height:1px;background:#000;"></div>
<div style="left:44px;top:259px;width:1px;height:419px;background:#000;"></div>
<div style="left:97px;top:259px;width:1px;height:419px;background:#000;"></div>
<div style="left:155px;top:259px;width:1px;height:419px;background:#000;"></div>
<div style="left:381px;top:259px;width:1px;height:419px;background:#000;"></div>
<div style="left:541px;top:259px;width:1px;height:419px;background:#000;"></div>
<div style="left:591px;top:259px;width:1px;height:419px;background:#000;"></div>
<div style="left:704px;top:259px;width:1px;height:419px;background:#000;"></div>
<div style="left:739px;top:259px;width:1px;height:419px;background:#000;"></div>
<div style="left:475px;top:273px;width:1px;height:405px;background:#000;"></div>
<div style="left:645px;top:296px;width:1px;height:382px;background:#000;"></div>
<div style="left:767px;top:296px;width:1px;height:382px;background:#000;"></div>
<div style="left:795px;top:296px;width:1px;height:382px;background:#000;"></div>
<div style="left:823px;top:296px;width:1px;height:382px;background:#000;"></div>
<div style="left:851px;top:273px;width:1px;height:405px;background:#000;"></div>
<div style="left:879px;top:296px;width:1px;height:382px;background:#000;"></div>
<div style="left:907px;top:296px;width:1px;height:382px;background:#000;"></div>
<div style="left:935px;top:296px;width:1px;height:382px;background:#000;"></div>
<div style="left:963px;top:296px;width:1px;height:382px;background:#000;"></div>
<div style="left:381px;top:273px;width:160px;height:1px;background:#000;"></div>
<div style="left:591px;top:296px;width:113px;height:1px;background:#000;"></div>
<div style="left:704px;top:310px;width:35px;height:1px;background:#000;"></div>
<div style="left:739px;top:273px;width:225px;height:1px;background:#000;"></div>
<div style="left:739px;top:296px;width:225px;height:1px;background:#000;"></div>
<div style="left:739px;top:310px;width:225px;height:1px;background:#000;"></div>
<div class="hc" style="left:23px;top:260px;width:21px;height:72px;font-size:9.3px;"><span>№</span></div>
<div class="hc" style="left:45px;top:260px;width:52px;height:72px;font-size:9.3px;"><span>Продукт</span></div>
<div class="hc" style="left:98px;top:260px;width:57px;height:72px;font-size:9.3px;"><span>Вид промо</span></div>
<div class="hc" style="left:156px;top:260px;width:225px;height:72px;font-size:9.3px;"><span>Название издания/радостанции</span></div>
<div class="hc" style="left:382px;top:260px;width:159px;height:13px;font-size:9.3px;padding-bottom:1.5px;box-sizing:border-box;"><span>Инфо о промо-партнере</span></div>
<div class="hc" style="left:382px;top:274px;width:93px;height:58px;font-size:9.3px;"><span>тираж/охват</span></div>
<div class="hc" style="left:476px;top:274px;width:65px;height:58px;font-size:9.3px;"><span>периодичнос<br>ть</span></div>
<div class="hc" style="left:542px;top:260px;width:49px;height:72px;font-size:9.3px;"><span>Размер<br>макета,<br>банера/х<br>ронометр<br>аж<br>ролика</span></div>
<div class="hc" style="left:592px;top:260px;width:112px;height:36px;font-size:9.7px;"><span>Количество<br>публикаций/ роликов<br>(сек) за период</span></div>
<div class="hc" style="left:592px;top:297px;width:53px;height:35px;font-size:9.2px;padding-bottom:2px;box-sizing:border-box;"><span>ПЛАН<br>за квартал</span></div>
<div class="hc" style="left:646px;top:297px;width:58px;height:35px;font-size:9.7px;"><span>ФАКТ<br>за<br>отчетный</span></div>
<div class="hc" style="left:705px;top:260px;width:34px;height:50px;font-size:9.1px;"><span>Оплат<br>а</span></div>
<div class="hc" style="left:740px;top:275px;width:111px;height:22px;font-size:6.8px;"><span>август</span></div>
<div class="hc" style="left:852px;top:275px;width:139px;height:22px;font-size:6.8px;"><span>сентябрь</span></div>
<div class="hc" style="left:740px;top:298.6px;width:27px;height:13px;font-size:6.7px;padding-left:3.5px;box-sizing:border-box;"><span>03.авг</span></div>
<div class="hc" style="left:740px;top:312px;width:27px;height:21px;font-size:6px;"><span>32</span></div>
<div class="hc" style="left:768px;top:298.6px;width:27px;height:13px;font-size:6.7px;padding-left:3.5px;box-sizing:border-box;"><span>10.авг</span></div>
<div class="hc" style="left:768px;top:312px;width:27px;height:21px;font-size:6px;"><span>33</span></div>
<div class="hc" style="left:796px;top:298.6px;width:27px;height:13px;font-size:6.7px;padding-left:3.5px;box-sizing:border-box;"><span>17.авг</span></div>
<div class="hc" style="left:796px;top:312px;width:27px;height:21px;font-size:6px;"><span>34</span></div>
<div class="hc" style="left:824px;top:298.6px;width:27px;height:13px;font-size:6.7px;padding-left:3.5px;box-sizing:border-box;"><span>24.авг</span></div>
<div class="hc" style="left:824px;top:312px;width:27px;height:21px;font-size:6px;"><span>35</span></div>
<div class="hc" style="left:852px;top:298.6px;width:27px;height:13px;font-size:6.7px;padding-left:3.5px;box-sizing:border-box;"><span>31.авг</span></div>
<div class="hc" style="left:852px;top:312px;width:27px;height:21px;font-size:6px;"><span>36</span></div>
<div class="hc" style="left:880px;top:298.6px;width:27px;height:13px;font-size:6.7px;padding-left:3.5px;box-sizing:border-box;"><span>07.сен</span></div>
<div class="hc" style="left:880px;top:312px;width:27px;height:21px;font-size:6px;"><span>37</span></div>
<div class="hc" style="left:908px;top:298.6px;width:27px;height:13px;font-size:6.7px;padding-left:3.5px;box-sizing:border-box;"><span>14.сен</span></div>
<div class="hc" style="left:908px;top:312px;width:27px;height:21px;font-size:6px;"><span>38</span></div>
<div class="hc" style="left:936px;top:298.6px;width:27px;height:13px;font-size:6.7px;padding-left:3.5px;box-sizing:border-box;"><span>21.сен</span></div>
<div class="hc" style="left:936px;top:312px;width:27px;height:21px;font-size:6px;"><span>39</span></div>
<div class="t b l" style="left:156px;top:204px;width:225px;height:13px;line-height:13px;padding-top:1px;">Прямая реклама из бюджета (деньги)</div>
<div class="t b c" style="left:382px;top:204px;width:93px;height:13px;line-height:13px;padding-top:0;">Д</div>
<div class="t b l" style="left:156px;top:218px;width:225px;height:13px;line-height:13px;padding-top:1px;">Бартер/Кросс-промо</div>
<div class="t b c" style="left:382px;top:218px;width:93px;height:13px;line-height:13px;padding-top:0;">Б</div>
<div class="t a" style="left:23px;top:333px;width:21px;height:13px;line-height:13px;">3 кв</div>
<div class="t bb" style="left:45px;top:333px;width:52px;height:13px;line-height:13px;">Лондонград</div>
<div class="t l" style="left:98px;top:333px;width:57px;height:13px;line-height:13px;">пресс-макет</div>
<div class="t l" style="left:156px;top:333px;width:225px;height:13px;line-height:13px;">Телесемь</div>
<div class="t l" style="left:382px;top:333px;width:93px;height:13px;line-height:13px;">291 900 чел.</div>
<div class="t l" style="left:476px;top:333px;width:65px;height:13px;line-height:13px;">еженедельник</div>
<div class="t l" style="left:542px;top:333px;width:49px;height:13px;line-height:13px;">1/1 полоса</div>
<div class="t b c" style="left:592px;top:333px;width:53px;height:13px;line-height:13px;font-size:10px;letter-spacing:-0.45px;">3</div>
<div class="t b c" style="left:705px;top:333px;width:34px;height:13px;line-height:13px;font-size:10px;">Б</div>
<div class="t a" style="left:23px;top:347px;width:21px;height:13px;line-height:13px;">3 кв</div>
<div class="t l" style="left:98px;top:347px;width:57px;height:13px;line-height:13px;">пресс-макет</div>
<div class="t l" style="left:156px;top:347px;width:225px;height:13px;line-height:13px;">Телезритель</div>
<div class="t l" style="left:382px;top:347px;width:93px;height:13px;line-height:13px;">122 700 чел.</div>
<div class="t l" style="left:476px;top:347px;width:65px;height:13px;line-height:13px;">еженедельник</div>
<div class="t l" style="left:542px;top:347px;width:49px;height:13px;line-height:13px;">1/1 полоса</div>
<div class="t b c" style="left:592px;top:347px;width:53px;height:13px;line-height:13px;font-size:10px;letter-spacing:-0.45px;">3</div>
<div class="t b c" style="left:705px;top:347px;width:34px;height:13px;line-height:13px;font-size:10px;">Б</div>
<div class="t a" style="left:23px;top:361px;width:21px;height:13px;line-height:13px;">3 кв</div>
<div class="t l" style="left:98px;top:361px;width:57px;height:13px;line-height:13px;">пресс-макет</div>
<div class="t l" style="left:156px;top:361px;width:225px;height:13px;line-height:13px;">Панорама</div>
<div class="t l" style="left:382px;top:361px;width:93px;height:13px;line-height:13px;">570 900 чел.</div>
<div class="t l" style="left:476px;top:361px;width:65px;height:13px;line-height:13px;">еженедельник</div>
<div class="t l" style="left:542px;top:361px;width:49px;height:13px;line-height:13px;">1/1 полоса</div>
<div class="t b c" style="left:592px;top:361px;width:53px;height:13px;line-height:13px;font-size:10px;letter-spacing:-0.45px;">3</div>
<div class="t b c" style="left:705px;top:361px;width:34px;height:13px;line-height:13px;font-size:10px;">Б</div>
<div class="t a" style="left:23px;top:375px;width:21px;height:13px;line-height:13px;">3 кв</div>
<div class="t l" style="left:98px;top:375px;width:57px;height:13px;line-height:13px;">пресс-макет</div>
<div class="t l" style="left:156px;top:375px;width:225px;height:13px;line-height:13px;">Metro</div>
<div class="t l" style="left:382px;top:375px;width:93px;height:13px;line-height:13px;">394 000 чел.</div>
<div class="t l" style="left:476px;top:375px;width:65px;height:13px;line-height:13px;">ежедневно</div>
<div class="t l" style="left:542px;top:375px;width:49px;height:13px;line-height:13px;">1/2 полоса</div>
<div class="t b c" style="left:592px;top:375px;width:53px;height:13px;line-height:13px;font-size:10px;letter-spacing:-0.45px;">3</div>
<div class="t b c" style="left:705px;top:375px;width:34px;height:13px;line-height:13px;font-size:10px;">Б</div>
<div class="t a" style="left:23px;top:389px;width:21px;height:13px;line-height:13px;">3 кв</div>
<div class="t a" style="left:23px;top:403px;width:21px;height:13px;line-height:13px;">3 кв</div>
<div class="t l" style="left:98px;top:403px;width:57px;height:13px;line-height:13px;">Радио</div>
<div class="t l" style="left:156px;top:403px;width:225px;height:13px;line-height:13px;">Радио Дача</div>
<div class="t l" style="left:382px;top:403px;width:93px;height:13px;line-height:13px;">191 400 чел./день</div>
<div class="t l" style="left:476px;top:403px;width:65px;height:13px;line-height:13px;">6 рол./день</div>
<div class="t l" style="left:542px;top:403px;width:49px;height:13px;line-height:13px;">15 сек.</div>
<div class="t b c" style="left:592px;top:403px;width:53px;height:13px;line-height:13px;font-size:10px;letter-spacing:-0.45px;">72 (1080)</div>
<div class="t b c" style="left:705px;top:403px;width:34px;height:13px;line-height:13px;font-size:10px;">Б</div>
<div class="t a" style="left:23px;top:417px;width:21px;height:13px;line-height:13px;">3 кв</div>
<div class="t l" style="left:98px;top:417px;width:57px;height:13px;line-height:13px;">Радио</div>
<div class="t l" style="left:156px;top:417px;width:225px;height:13px;line-height:13px;">Русское радио</div>
<div class="t l" style="left:382px;top:417px;width:93px;height:13px;line-height:13px;">281 000 чел./день</div>
<div class="t l" style="left:476px;top:417px;width:65px;height:13px;line-height:13px;">6 рол./день</div>
<div class="t l" style="left:542px;top:417px;width:49px;height:13px;line-height:13px;">15 сек.</div>
<div class="t b c" style="left:592px;top:417px;width:53px;height:13px;line-height:13px;font-size:10px;letter-spacing:-0.45px;">72 (1080)</div>
<div class="t b c" style="left:705px;top:417px;width:34px;height:13px;line-height:13px;font-size:10px;">Б</div>
<div class="t a" style="left:23px;top:431px;width:21px;height:13px;line-height:13px;">3 кв</div>
<div class="t l" style="left:98px;top:431px;width:57px;height:13px;line-height:13px;">Радио</div>
<div class="t l" style="left:156px;top:431px;width:225px;height:13px;line-height:13px;">Love Radio</div>
<div class="t l" style="left:382px;top:431px;width:93px;height:13px;line-height:13px;">199 800 чел./день</div>
<div class="t l" style="left:476px;top:431px;width:65px;height:13px;line-height:13px;">6 рол./день</div>
<div class="t l" style="left:542px;top:431px;width:49px;height:13px;line-height:13px;">15 сек.</div>
<div class="t b c" style="left:592px;top:431px;width:53px;height:13px;line-height:13px;font-size:10px;letter-spacing:-0.45px;">72 (1080)</div>
<div class="t b c" style="left:705px;top:431px;width:34px;height:13px;line-height:13px;font-size:10px;">Б</div>
<div class="t a" style="left:23px;top:445px;width:21px;height:13px;line-height:13px;">3 кв</div>
<div class="t l" style="left:98px;top:445px;width:57px;height:13px;line-height:13px;">Радио</div>
<div class="t l" style="left:156px;top:445px;width:225px;height:13px;line-height:13px;">Эльдорадио</div>
<div class="t l" style="left:382px;top:445px;width:93px;height:13px;line-height:13px;">197 700 чел./день</div>
<div class="t l" style="left:476px;top:445px;width:65px;height:13px;line-height:13px;">6 рол./день</div>
<div class="t l" style="left:542px;top:445px;width:49px;height:13px;line-height:13px;">15 сек.</div>
<div class="t b c" style="left:592px;top:445px;width:53px;height:13px;line-height:13px;font-size:10px;letter-spacing:-0.45px;">72 (1080)</div>
<div class="t b c" style="left:705px;top:445px;width:34px;height:13px;line-height:13px;font-size:10px;">Б</div>
<div class="t a" style="left:23px;top:459px;width:21px;height:13px;line-height:13px;">3 кв</div>
<div class="t l" style="left:98px;top:459px;width:57px;height:13px;line-height:13px;">Радио</div>
<div class="t l" style="left:156px;top:459px;width:225px;height:13px;line-height:13px;">Авторадио</div>
<div class="t l" style="left:382px;top:459px;width:93px;height:13px;line-height:13px;">238 500 чел./день</div>
<div class="t l" style="left:476px;top:459px;width:65px;height:13px;line-height:13px;">6 рол./день</div>
<div class="t l" style="left:542px;top:459px;width:49px;height:13px;line-height:13px;">15 сек.</div>
<div class="t b c" style="left:592px;top:459px;width:53px;height:13px;line-height:13px;font-size:10px;letter-spacing:-0.45px;">72 (1080)</div>
<div class="t b c" style="left:705px;top:459px;width:34px;height:13px;line-height:13px;font-size:10px;">Б</div>
<div class="t a" style="left:23px;top:473px;width:21px;height:13px;line-height:13px;">3 кв</div>
<div class="t l" style="left:98px;top:473px;width:57px;height:13px;line-height:13px;">Радио</div>
<div class="t l" style="left:156px;top:473px;width:225px;height:13px;line-height:13px;">Наше Радио</div>
<div class="t l" style="left:382px;top:473px;width:93px;height:13px;line-height:13px;">257 900 чел./день</div>
<div class="t l" style="left:476px;top:473px;width:65px;height:13px;line-height:13px;">6 рол./день</div>
<div class="t l" style="left:542px;top:473px;width:49px;height:13px;line-height:13px;">15 сек.</div>
<div class="t b c" style="left:592px;top:473px;width:53px;height:13px;line-height:13px;font-size:10px;letter-spacing:-0.45px;">72 (1080)</div>
<div class="t b c" style="left:705px;top:473px;width:34px;height:13px;line-height:13px;font-size:10px;">Б</div>
<div class="t a" style="left:23px;top:487px;width:21px;height:13px;line-height:13px;">3 кв</div>
<div class="t l" style="left:98px;top:487px;width:57px;height:13px;line-height:13px;">Радио</div>
<div class="t l" style="left:156px;top:487px;width:225px;height:13px;line-height:13px;">Юмор ФМ</div>
<div class="t l" style="left:382px;top:487px;width:93px;height:13px;line-height:13px;">140 300 чел./день</div>
<div class="t l" style="left:476px;top:487px;width:65px;height:13px;line-height:13px;">6 рол./день</div>
<div class="t l" style="left:542px;top:487px;width:49px;height:13px;line-height:13px;">15 сек.</div>
<div class="t b c" style="left:592px;top:487px;width:53px;height:13px;line-height:13px;font-size:10px;letter-spacing:-0.45px;">72 (1080)</div>
<div class="t b c" style="left:705px;top:487px;width:34px;height:13px;line-height:13px;font-size:10px;">Б</div>
<div class="t a" style="left:23px;top:501px;width:21px;height:13px;line-height:13px;">3 кв</div>
<div class="t l" style="left:98px;top:501px;width:57px;height:13px;line-height:13px;">Радио</div>
<div class="t l" style="left:156px;top:501px;width:225px;height:13px;line-height:13px;">Радио Рекорд</div>
<div class="t l" style="left:382px;top:501px;width:93px;height:13px;line-height:13px;">346 0000 чел./день</div>
<div class="t l" style="left:476px;top:501px;width:65px;height:13px;line-height:13px;">6 рол./день</div>
<div class="t l" style="left:542px;top:501px;width:49px;height:13px;line-height:13px;">15 сек.</div>
<div class="t b c" style="left:592px;top:501px;width:53px;height:13px;line-height:13px;font-size:10px;letter-spacing:-0.45px;">72 (1080)</div>
<div class="t b c" style="left:705px;top:501px;width:34px;height:13px;line-height:13px;font-size:10px;">Б</div>
<div class="t a" style="left:23px;top:515px;width:21px;height:13px;line-height:13px;">3 кв</div>
<div class="t l" style="left:98px;top:515px;width:57px;height:13px;line-height:13px;">Радио</div>
<div class="t l" style="left:156px;top:515px;width:225px;height:13px;line-height:13px;">DFM</div>
<div class="t l" style="left:382px;top:515px;width:93px;height:13px;line-height:13px;">208 600 чел./день</div>
<div class="t l" style="left:476px;top:515px;width:65px;height:13px;line-height:13px;">6 рол./день</div>
<div class="t l" style="left:542px;top:515px;width:49px;height:13px;line-height:13px;">15 сек.</div>
<div class="t b c" style="left:592px;top:515px;width:53px;height:13px;line-height:13px;font-size:10px;letter-spacing:-0.45px;">72 (1080)</div>
<div class="t b c" style="left:705px;top:515px;width:34px;height:13px;line-height:13px;font-size:10px;">Б</div>
<div class="t a" style="left:23px;top:529px;width:21px;height:13px;line-height:13px;">3 кв</div>
<div class="t l" style="left:98px;top:529px;width:57px;height:13px;line-height:13px;">Радио</div>
<div class="t l" style="left:156px;top:529px;width:225px;height:13px;line-height:13px;">Energy</div>
<div class="t l" style="left:382px;top:529px;width:93px;height:13px;line-height:13px;">163 300 чел./день</div>
<div class="t l" style="left:476px;top:529px;width:65px;height:13px;line-height:13px;">6 рол./день</div>
<div class="t l" style="left:542px;top:529px;width:49px;height:13px;line-height:13px;">15 сек.</div>
<div class="t b c" style="left:592px;top:529px;width:53px;height:13px;line-height:13px;font-size:10px;letter-spacing:-0.45px;">72 (1080)</div>
<div class="t b c" style="left:705px;top:529px;width:34px;height:13px;line-height:13px;font-size:10px;">Б</div>
<div class="t a" style="left:23px;top:543px;width:21px;height:13px;line-height:13px;">3 кв</div>
<div class="t l" style="left:98px;top:543px;width:57px;height:13px;line-height:13px;">Радио</div>
<div class="t l" style="left:156px;top:543px;width:225px;height:13px;line-height:13px;">Maximum</div>
<div class="t l" style="left:382px;top:543px;width:93px;height:13px;line-height:13px;">160 800 чел./день</div>
<div class="t l" style="left:476px;top:543px;width:65px;height:13px;line-height:13px;">6 рол./день</div>
<div class="t l" style="left:542px;top:543px;width:49px;height:13px;line-height:13px;">15 сек.</div>
<div class="t b c" style="left:592px;top:543px;width:53px;height:13px;line-height:13px;font-size:10px;letter-spacing:-0.45px;">72 (1080)</div>
<div class="t b c" style="left:705px;top:543px;width:34px;height:13px;line-height:13px;font-size:10px;">Б</div>
<div class="t a" style="left:23px;top:557px;width:21px;height:13px;line-height:13px;">3 кв</div>
<div class="t l" style="left:98px;top:557px;width:57px;height:13px;line-height:13px;">Радио</div>
<div class="t l" style="left:156px;top:557px;width:225px;height:13px;line-height:13px;">Кекс FM</div>
<div class="t l" style="left:382px;top:557px;width:93px;height:13px;line-height:13px;">192 100 чел./день</div>
<div class="t l" style="left:476px;top:557px;width:65px;height:13px;line-height:13px;">6 рол./день</div>
<div class="t l" style="left:542px;top:557px;width:49px;height:13px;line-height:13px;">15 сек.</div>
<div class="t b c" style="left:592px;top:557px;width:53px;height:13px;line-height:13px;font-size:10px;letter-spacing:-0.45px;">72 (1080)</div>
<div class="t b c" style="left:705px;top:557px;width:34px;height:13px;line-height:13px;font-size:10px;">Б</div>
<div class="t a" style="left:23px;top:571px;width:21px;height:13px;line-height:13px;">3 кв</div>
<div class="t a" style="left:23px;top:585px;width:21px;height:13px;line-height:13px;">3 кв</div>
<div class="t l" style="left:98px;top:585px;width:57px;height:13px;line-height:13px;">Indoor</div>
<div class="t l" style="left:156px;top:585px;width:225px;height:13px;line-height:13px;">Реклама в маршрутках</div>
<div class="t l" style="left:382px;top:585px;width:93px;height:13px;line-height:13px;">4 100 000 чел./мес.</div>
<div class="t b c" style="left:705px;top:585px;width:34px;height:13px;line-height:13px;font-size:10px;">Б</div>
<div class="t a" style="left:23px;top:599px;width:21px;height:13px;line-height:13px;">3 кв</div>
<div class="t a" style="left:23px;top:613px;width:21px;height:13px;line-height:13px;">3 кв</div>
<div class="t l" style="left:98px;top:613px;width:57px;height:13px;line-height:13px;">Интернет</div>
<div class="t l" style="left:156px;top:613px;width:225px;height:13px;line-height:13px;">рекламная кампания в сети Интернет</div>
<div class="t l" style="left:382px;top:613px;width:93px;height:13px;line-height:13px;">12 000 000 показов</div>
<div class="t b c" style="left:705px;top:613px;width:34px;height:13px;line-height:13px;font-size:10px;">Д</div>
<div class="t a" style="left:23px;top:627px;width:21px;height:13px;line-height:13px;">3 кв</div>
<div class="t l" style="left:156px;top:627px;width:225px;height:13px;line-height:13px;">Рекламная кампания на Youtube</div>
<div class="t l" style="left:382px;top:627px;width:93px;height:13px;line-height:13px;">500 000 показов</div>
<div class="t b c" style="left:705px;top:627px;width:34px;height:13px;line-height:13px;font-size:10px;">Д</div>
<div class="t a" style="left:23px;top:641px;width:21px;height:13px;line-height:13px;">3 кв</div>
<div class="t a" style="left:23px;top:655px;width:21px;height:13px;line-height:13px;">3 кв</div>
<div class="t l" style="left:98px;top:655px;width:57px;height:13px;line-height:13px;">Indoor/BTL</div>
<div class="t l" style="left:156px;top:655px;width:225px;height:13px;line-height:13px;">Реклама в кинотеатрах Формула кино (ролик)</div>
<div class="t l" style="left:382px;top:655px;width:93px;height:13px;line-height:13px;">60 000 чел. в 1 к/т</div>
<div class="t b c" style="left:592px;top:655px;width:53px;height:13px;line-height:13px;font-size:10px;letter-spacing:-0.45px;">100 000</div>
<div class="t b c" style="left:705px;top:655px;width:34px;height:13px;line-height:13px;font-size:10px;">Д</div>
<div class="t a" style="left:23px;top:669px;width:21px;height:13px;line-height:13px;">3 кв</div>
<div class="t l" style="left:156px;top:669px;width:225px;height:13px;line-height:13px;">Промоакции в ТЦ Мега</div>
<div class="t b c" style="left:705px;top:669px;width:34px;height:13px;line-height:13px;font-size:10px;">Д</div>
</div>
<div id="bot" style="top:678px;height:26px;background:#f5f5f5;">
<div style="left:0;top:0;width:964px;height:1px;background:#bdbdbd"></div>
<svg style="left:26px;top:9px" width="6" height="9"><path d="M5.5 0.5v8L0.5 4.5z" fill="#c6c6c6"/></svg>
<svg style="left:56px;top:9px" width="6" height="9"><path d="M0.5 0.5v8L5.5 4.5z" fill="#c6c6c6"/></svg>
<div style="left:100px;top:0;width:70px;height:22px;background:#fff;border-left:1px solid #c9c9c9;border-right:1px solid #c9c9c9;box-sizing:border-box"></div>
<div style="left:100px;top:22px;width:70px;height:2px;background:#217346"></div>
<div style="left:100px;top:5.5px;width:70px;text-align:center;font-size:13.1px;font-weight:bold;color:#217346;line-height:16px;white-space:nowrap">3 кв-ал</div>
<svg style="left:202px;top:5px" width="18" height="18"><circle cx="9" cy="9" r="7.6" fill="none" stroke="#777" stroke-width="1.2"/><path d="M4.8 9h8.4M9 4.8v8.4" stroke="#777" stroke-width="1.6"/></svg>
<svg style="left:818px;top:6px" width="4" height="14"><rect x="0.6" y="0.3" width="2" height="2" fill="#a6a6a6"/><rect x="0.6" y="5.3" width="2" height="2" fill="#a6a6a6"/><rect x="0.6" y="10.3" width="2" height="2" fill="#a6a6a6"/></svg>
<div style="left:836px;top:7px;width:15px;height:15px;background:#fff;border:1px solid #ababab;box-sizing:border-box"></div>
<svg style="left:840px;top:10px" width="6" height="9"><path d="M5.5 0.5v8L0.5 4.5z" fill="#555"/></svg>
<div style="left:851px;top:7px;width:130px;height:15px;background:#fff;border:1px solid #ababab;border-left:none;box-sizing:border-box"></div>
</div>
<svg style="position:absolute;left:944px;top:620px" width="20" height="40" viewBox="944 620 20 40"><circle cx="966.2" cy="639.5" r="11.5" fill="#c9c9c9"/><path d="M958.8 639.3A7.4 7.4 0 0 1 973.6 639.3Z" fill="#fff"/><path d="M963.5 631v8" stroke="#000" stroke-width="1"/><path d="M955 640.5h9" stroke="#7a7a7a" stroke-width="1"/></svg>
<div style="position:absolute;left:963px;top:641px;width:1px;height:37px;background:#707070"></div>

</body></html>
